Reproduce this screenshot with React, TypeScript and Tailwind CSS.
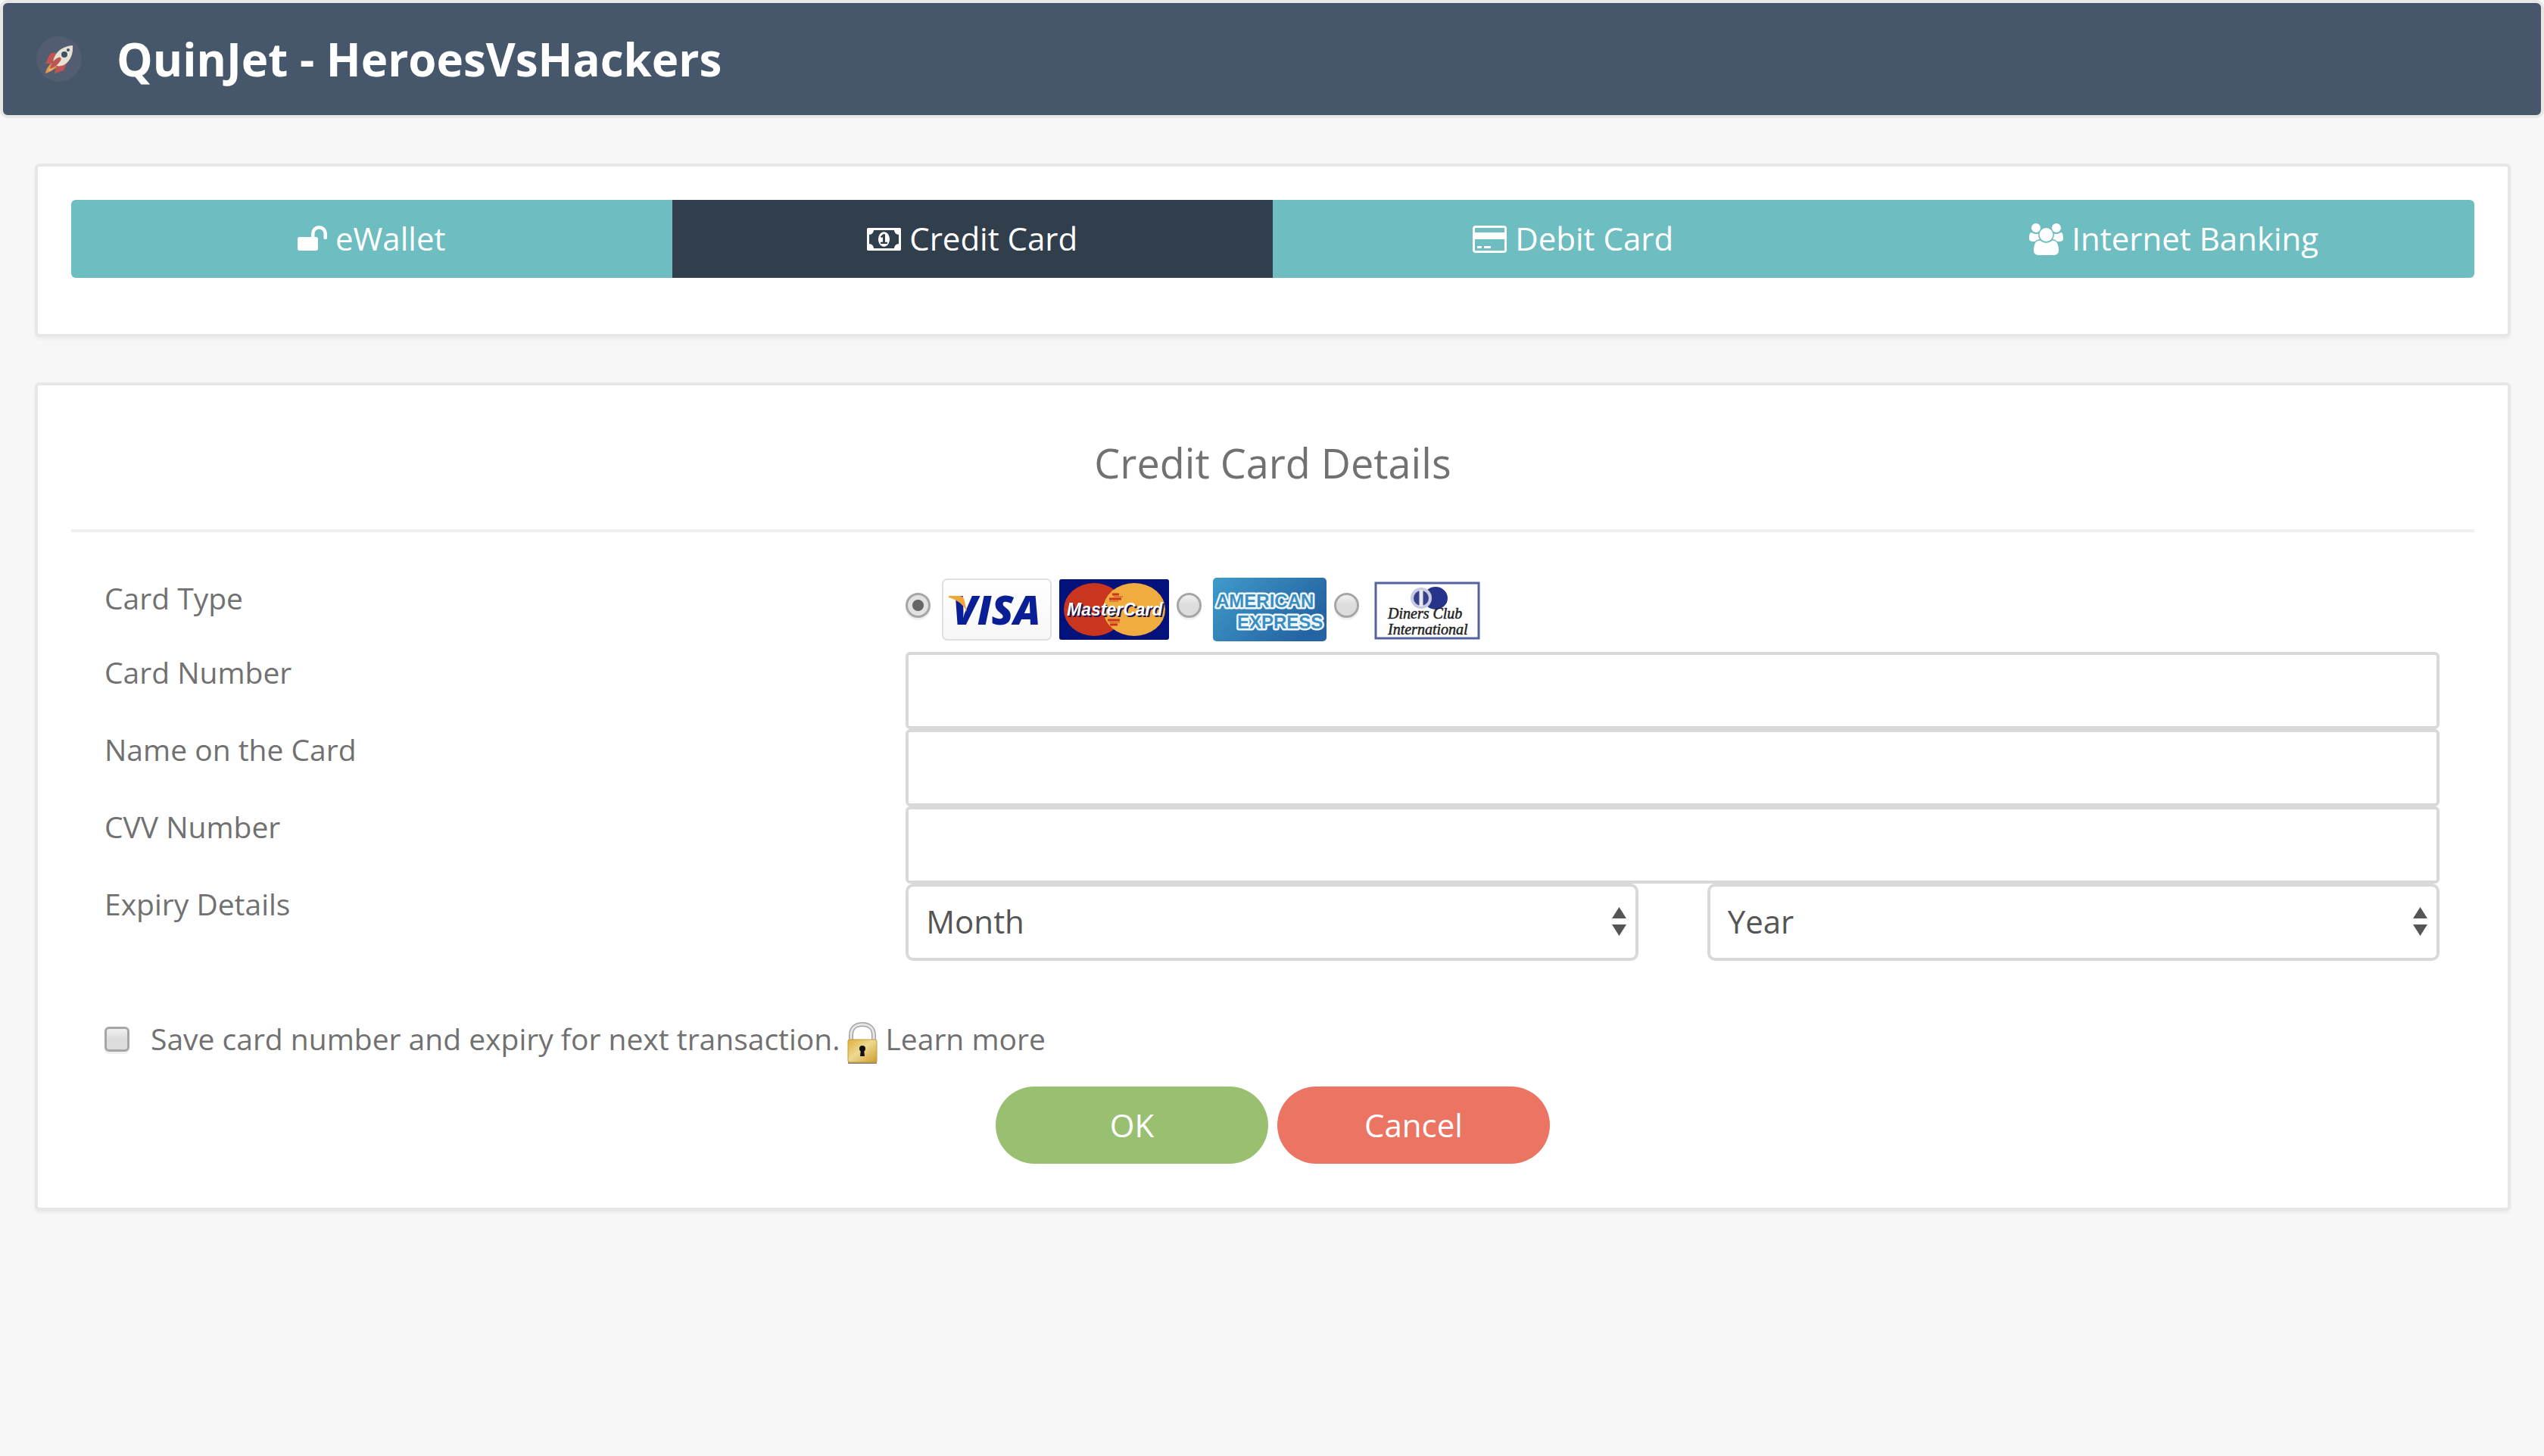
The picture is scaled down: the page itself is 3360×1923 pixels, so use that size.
import type { ReactNode } from 'react';

const UNLOCK =
  'M1664 576v256q0 26-19 45t-45 19h-64q-26 0-45-19t-19-45v-256q0-106-75-181t-181-75-181 75-75 181v192h96q40 0 68 28t28 68v576q0 40-28 68t-68 28H96q-40 0-68-28t-28-68V864q0-40 28-68t68-28h672V576q0-185 131.5-316.5T1216 128t316.5 131.5T1664 576z';
const MONEY =
  'M768 1152h384v-96h-128V608H910L762 745l77 80q42-37 55-57h2v288H768v96zm512-256q0 70-21 142t-59.5 134-101.5 101-138 39-138-39-101.5-101-59.5-134-21-142 21-142 59.5-134T822.5 519t138-39 138 39T1200 620t59.5 134 20.5 142zm512 256V640q-106 0-181-75t-75-181H384q0 106-75 181t-181 75v512q106 0 181 75t75 181h1152q0-106 75-181t181-75zm128-832v1152q0 26-19 45t-45 19H64q-26 0-45-19t-19-45V320q0-26 19-45t45-19h1792q26 0 45 19t19 45z';
const CARD =
  'M1760 128q66 0 113 47t47 113v1216q0 66-47 113t-113 47H160q-66 0-113-47t-47-113V288q0-66 47-113t113-47h1600zM160 256q-13 0-22.5 9.5T128 288v224h1664V288q0-13-9.5-22.5T1760 256H160zm1600 1280q13 0 22.5-9.5t9.5-22.5V896H128v608q0 13 9.5 22.5t22.5 9.5h1600zM256 1408v-128h256v128H256zm384 0v-128h384v128H640z';
const USERS =
  'M593 896q-162 5-265 128H194q-82 0-138-40.5T0 865q0-353 124-353 6 0 43.5 21t97.5 42.5T384 597q67 0 133-23-5 37-5 66 0 139 81 256zm1071 637q0 120-73 189.5t-194 69.5H523q-121 0-194-69.5T256 1533q0-53 3.5-103.5t14-109T300 1212t43-97.5 62-81 85.5-53.5T602 960q10 0 43 21.5t73 48 107 48 135 21.5 135-21.5 107-48 73-48 43-21.5q61 0 111.5 20t85.5 53.5 62 81 43 97.5 26.5 108.5 14 109 3.5 103.5zM640 256q0 106-75 181t-181 75-181-75-75-181 75-181T384 0t181 75 75 181zm704 384q0 159-112.5 271.5T960 1024 688.5 911.5 576 640t112.5-271.5T960 256t271.5 112.5T1344 640zm576 225q0 78-56 118.5t-138 40.5h-134q-103-123-265-128 81-117 81-256 0-29-5-66 66 23 133 23 59 0 119-21.5t97.5-42.5 43.5-21q124 0 124 353zm-128-609q0 106-75 181t-181 75-181-75-75-181 75-181 181-75 181 75 75 181z';

const tabs = [
  { name: 'eWallet', path: UNLOCK, width: 1664, active: false },
  { name: 'Credit Card', path: MONEY, width: 1920, active: true },
  { name: 'Debit Card', path: CARD, width: 1920, active: false },
  { name: 'Internet Banking', path: USERS, width: 1920, active: false },
];

function Rocket() {
  return (
    <svg viewBox="0 0 60 60" className="size-[60px]" aria-hidden="true">
      <circle cx="30" cy="30" r="30" fill="#525d72" />
      <path d="M12 36l6-13 8-2-5 15z" fill="#bf5450" />
      <path d="M24 49l2-9 14-4-4 9z" fill="#bf5450" />
      <path d="M48 12c-11 1-20 6-24 15-2 4-2 7-1 10 4 3 8 3 13 1 9-5 13-15 12-26z" fill="#e3e2d4" />
      <path d="M12 49c1-6 4-11 9-14l6 5c-3 4-9 7-15 9z" fill="#dd9b52" />
      <path d="M16 46c2-5 4-8 7-10l2 3c-2 3-5 5-9 7z" fill="#f2bd62" />
      <path d="M18 43c1-7 6-13 11-15 3-1 5 1 3 4-3 5-8 9-14 11z" fill="#bf5450" />
      <circle cx="37" cy="24" r="4" fill="#3f4f62" />
      <circle cx="42" cy="18" r="2" fill="#3f4f62" />
    </svg>
  );
}

function Visa() {
  return (
    <svg viewBox="0 0 145 82" className="h-[82px] w-[145px]" role="img" aria-label="Visa">
      <defs>
        <linearGradient id="visa-bg" x1="0" y1="0" x2="0" y2="1">
          <stop offset="0" stopColor="#fff" />
          <stop offset="1" stopColor="#f7f7f7" />
        </linearGradient>
      </defs>
      <rect x="1" y="1" width="143" height="80" rx="6" fill="url(#visa-bg)" stroke="#e0e0e0" strokeWidth="2" />
      <text x="14" y="61" fontFamily="Open Sans" fontWeight="800" fontStyle="italic" fontSize="53" fill="#0a1f96">
        VISA
      </text>
      <path d="M9 23h14c5 0 6 3 7 7l3 14C28 34 20 28 9 25z" fill="#efa63c" />
    </svg>
  );
}

function MasterCard() {
  return (
    <svg viewBox="0 0 145 80" className="h-[80px] w-[145px]" role="img" aria-label="MasterCard">
      <rect width="145" height="80" rx="3" fill="#03127a" />
      <ellipse cx="46" cy="40" rx="40" ry="35" fill="#c9351f" />
      <ellipse cx="99" cy="40" rx="41" ry="35" fill="#f1ac3f" />
      <path d="M70 20h9M66 26h16M64 54h16M67 60h10" stroke="#c9351f" strokeWidth="3" />
      <path d="M72 23h12M66 29h12M66 57h14" stroke="#e07a33" strokeWidth="2" />
      <text
        x="10"
        y="48"
        fontFamily="Liberation Sans"
        fontWeight="700"
        fontStyle="italic"
        fontSize="23"
        fill="#fff"
        className="drop-shadow-[2px_2px_0_#1b1b57]"
      >
        MasterCard
      </text>
    </svg>
  );
}

function Amex() {
  return (
    <svg viewBox="0 0 150 84" className="h-[84px] w-[150px]" role="img" aria-label="American Express">
      <defs>
        <linearGradient id="amex-bg" x1="0" y1="0" x2="1" y2="0.5">
          <stop offset="0" stopColor="#3f9bca" />
          <stop offset="1" stopColor="#2564a2" />
        </linearGradient>
      </defs>
      <rect width="150" height="84" rx="5" fill="url(#amex-bg)" />
      <g fontFamily="Liberation Sans" fontWeight="700" fill="#3a8ec2" stroke="#eef6fb" strokeWidth="5" strokeLinejoin="round" paintOrder="stroke" fontSize="24">
        <text x="4" y="39">AMERICAN</text>
        <text x="32" y="67">EXPRESS</text>
      </g>
    </svg>
  );
}

function Diners() {
  return (
    <svg viewBox="0 0 150 84" className="h-[84px] w-[150px]" role="img" aria-label="Diners Club International">
      <rect x="7" y="7" width="136" height="73" fill="#fff" stroke="#55639f" strokeWidth="3" />
      <ellipse cx="86" cy="27" rx="16" ry="15" fill="#27348b" />
      <circle cx="67" cy="27" r="14" fill="#c9cbe0" />
      <circle cx="67" cy="27" r="10" fill="#39418a" />
      <path d="M67 16v22" stroke="#e6e7f2" strokeWidth="5" />
      <g fontFamily="Liberation Serif" fontStyle="italic" fontSize="20" fill="#222" stroke="#222" strokeWidth="0.5">
        <text x="23" y="54">Diners Club</text>
        <text x="23" y="75">International</text>
      </g>
    </svg>
  );
}

function Padlock() {
  return (
    <svg viewBox="0 0 40 56" className="mt-3 h-[56px] w-[40px]" aria-hidden="true">
      <defs>
        <linearGradient id="lock-body" x1="0" y1="0" x2="1" y2="1">
          <stop offset="0" stopColor="#dcae3c" />
          <stop offset="0.45" stopColor="#eeda92" />
          <stop offset="1" stopColor="#cf9d2c" />
        </linearGradient>
      </defs>
      <path d="M5 25V17C5 8 11 3 20 3s15 5 15 14v8" fill="none" stroke="#a3a3a3" strokeWidth="6" />
      <path d="M5 25V17C5 8 11 3 20 3s15 5 15 14v8" fill="none" stroke="#e6e6e6" strokeWidth="3" />
      <rect x="1" y="51" width="38" height="4" rx="1" fill="#8f8b80" />
      <rect x="1" y="23" width="38" height="30" rx="2" fill="url(#lock-body)" stroke="#c39a3c" />
      <circle cx="20" cy="35" r="4" fill="#111" />
      <path d="M18 36h4l1 9h-6z" fill="#111" />
    </svg>
  );
}

function Panel({ className, children }: { className: string; children: ReactNode }) {
  return (
    <section className={`rounded-md border-4 border-[#e7e7e7] bg-white px-[44px] pt-[44px] shadow-[0_3px_4px_rgba(0,0,0,0.05)] ${className}`}>
      {children}
    </section>
  );
}

function RadioOption({ id, checked, children }: { id: string; checked?: boolean; children: ReactNode }) {
  return (
    <div className="flex items-start">
      <input
        type="radio"
        name="cardType"
        id={id}
        defaultChecked={checked}
        className="mt-5 mr-[15px] size-[33px] appearance-none rounded-full border-3 border-[#a6a6a6] bg-linear-to-b from-[#f0f0f0] to-[#dcdcdc] to-50% shadow-[0_3px_0_#f0f0f0] checked:bg-[radial-gradient(circle,#666_7px,#e2e2e2_8px)]"
      />
      <label htmlFor={id} className="flex h-[84px] items-center gap-[10px]">
        {children}
      </label>
    </div>
  );
}

function TextRow({ id, label }: { id: string; label: string }) {
  return (
    <>
      <label htmlFor={id} className="leading-[54px]">
        {label}
      </label>
      <input
        id={id}
        type="text"
        className="col-span-2 h-[102px] w-full rounded-md border-4 border-[#d9d9d9] bg-white px-6 text-[42px] text-[#555] outline-none"
      />
    </>
  );
}

function Dropdown({ label, options }: { label: string; options: string[] }) {
  return (
    <div className="relative">
      <select
        aria-label={label}
        className="h-[102px] w-full appearance-none rounded-[10px] border-4 border-[#d9d9d9] bg-white px-[23px] pb-[3px] text-[42px] text-[#555] outline-none"
      >
        <option>{label}</option>
        {options.map((o) => (
          <option key={o}>{o}</option>
        ))}
      </select>
      <svg viewBox="0 0 19 38" className="pointer-events-none absolute top-[31px] right-4 h-[38px] w-[19px]" aria-hidden="true">
        <path d="M9.500 0L19 15H0zM0 23h19L9.500 38z" fill="#555" />
      </svg>
    </div>
  );
}

const months = ['01', '02', '03', '04', '05', '06', '07', '08', '09', '10', '11', '12'];
const years = ['2017', '2018', '2019', '2020', '2021', '2022'];

export default function App() {
  return (
    <div className="min-h-screen bg-[#f7f7f7] font-['Open_Sans',sans-serif] text-[39px] text-[#717171]">
      <header className="flex items-center gap-[46px] rounded-[10px] border-4 border-[#e7e7e7] bg-[#47576b] px-[44px] py-[44px]">
        <Rocket />
        <h1 className="text-[60px] leading-[60px] font-bold text-white">QuinJet - HeroesVsHackers</h1>
      </header>

      <main className="flex flex-col gap-[60px] py-[60px] pr-[44px] pl-[46px]">
        <Panel className="pb-[74px]">
          <nav className="grid grid-cols-4 overflow-hidden rounded-md text-[42px] leading-[42px] text-white">
            {tabs.map((t) => (
              <button
                key={t.name}
                type="button"
                aria-pressed={t.active}
                className={`py-[30px] text-center ${t.active ? 'bg-[#313e4c]' : 'bg-[#6dbdc1]'}`}
              >
                <svg
                  viewBox={`0 0 ${t.width} 1792`}
                  className="inline-block h-[42px] w-auto align-[-6px]"
                  fill="currentColor"
                  aria-hidden="true"
                >
                  <path d={t.path} />
                </svg>{' '}
                {t.name}
              </button>
            ))}
          </nav>
        </Panel>

        <Panel className="pb-[58px]">
          <form onSubmit={(e) => e.preventDefault()}>
            <h2 className="border-b-4 border-[#f0f0f0] pt-7 pb-[58px] text-center text-[54px] leading-[60px]">
              Credit Card Details
            </h2>

            <div className="mt-[60px] grid grid-cols-3 gap-x-[91px] pr-[46px] pl-[44px]">
              <span id="card-type" className="leading-[54px]">
                Card Type
              </span>
              <div role="radiogroup" aria-labelledby="card-type" className="col-span-2 flex items-start gap-[10px] pb-[14px]">
                <RadioOption id="visa-mc" checked>
                  <Visa />
                  <MasterCard />
                </RadioOption>
                <RadioOption id="amex">
                  <Amex />
                </RadioOption>
                <RadioOption id="diners">
                  <Diners />
                </RadioOption>
              </div>

              <TextRow id="number" label="Card Number" />
              <TextRow id="holder" label="Name on the Card" />
              <TextRow id="cvv" label="CVV Number" />

              <span className="leading-[54px]">Expiry Details</span>
              <Dropdown label="Month" options={months} />
              <Dropdown label="Year" options={years} />
            </div>

            <div className="mt-[76px] flex h-[54px] items-center px-[44px] leading-[54px]">
              <input
                type="checkbox"
                id="save"
                className="mr-7 size-[33px] appearance-none rounded-md border-3 border-[#a6a6a6] bg-linear-to-b from-[#f0f0f0] to-[#dcdcdc] to-50% shadow-[0_3px_0_#f0f0f0]"
              />
              <label htmlFor="save">Save card number and expiry for next transaction.</label>
              <a href="#learn-more" className="ml-[10px] flex items-center gap-[10px]">
                <Padlock />
                Learn more
              </a>
            </div>

            <div className="mt-[36px] flex justify-center gap-3 text-[42px] leading-[42px] text-white">
              <button type="submit" className="w-[360px] rounded-full bg-[#99c070] py-[30px]">
                OK
              </button>
              <button type="button" className="w-[360px] rounded-full bg-[#eb7462] py-[30px]">
                Cancel
              </button>
            </div>
          </form>
        </Panel>
      </main>
    </div>
  );
}
